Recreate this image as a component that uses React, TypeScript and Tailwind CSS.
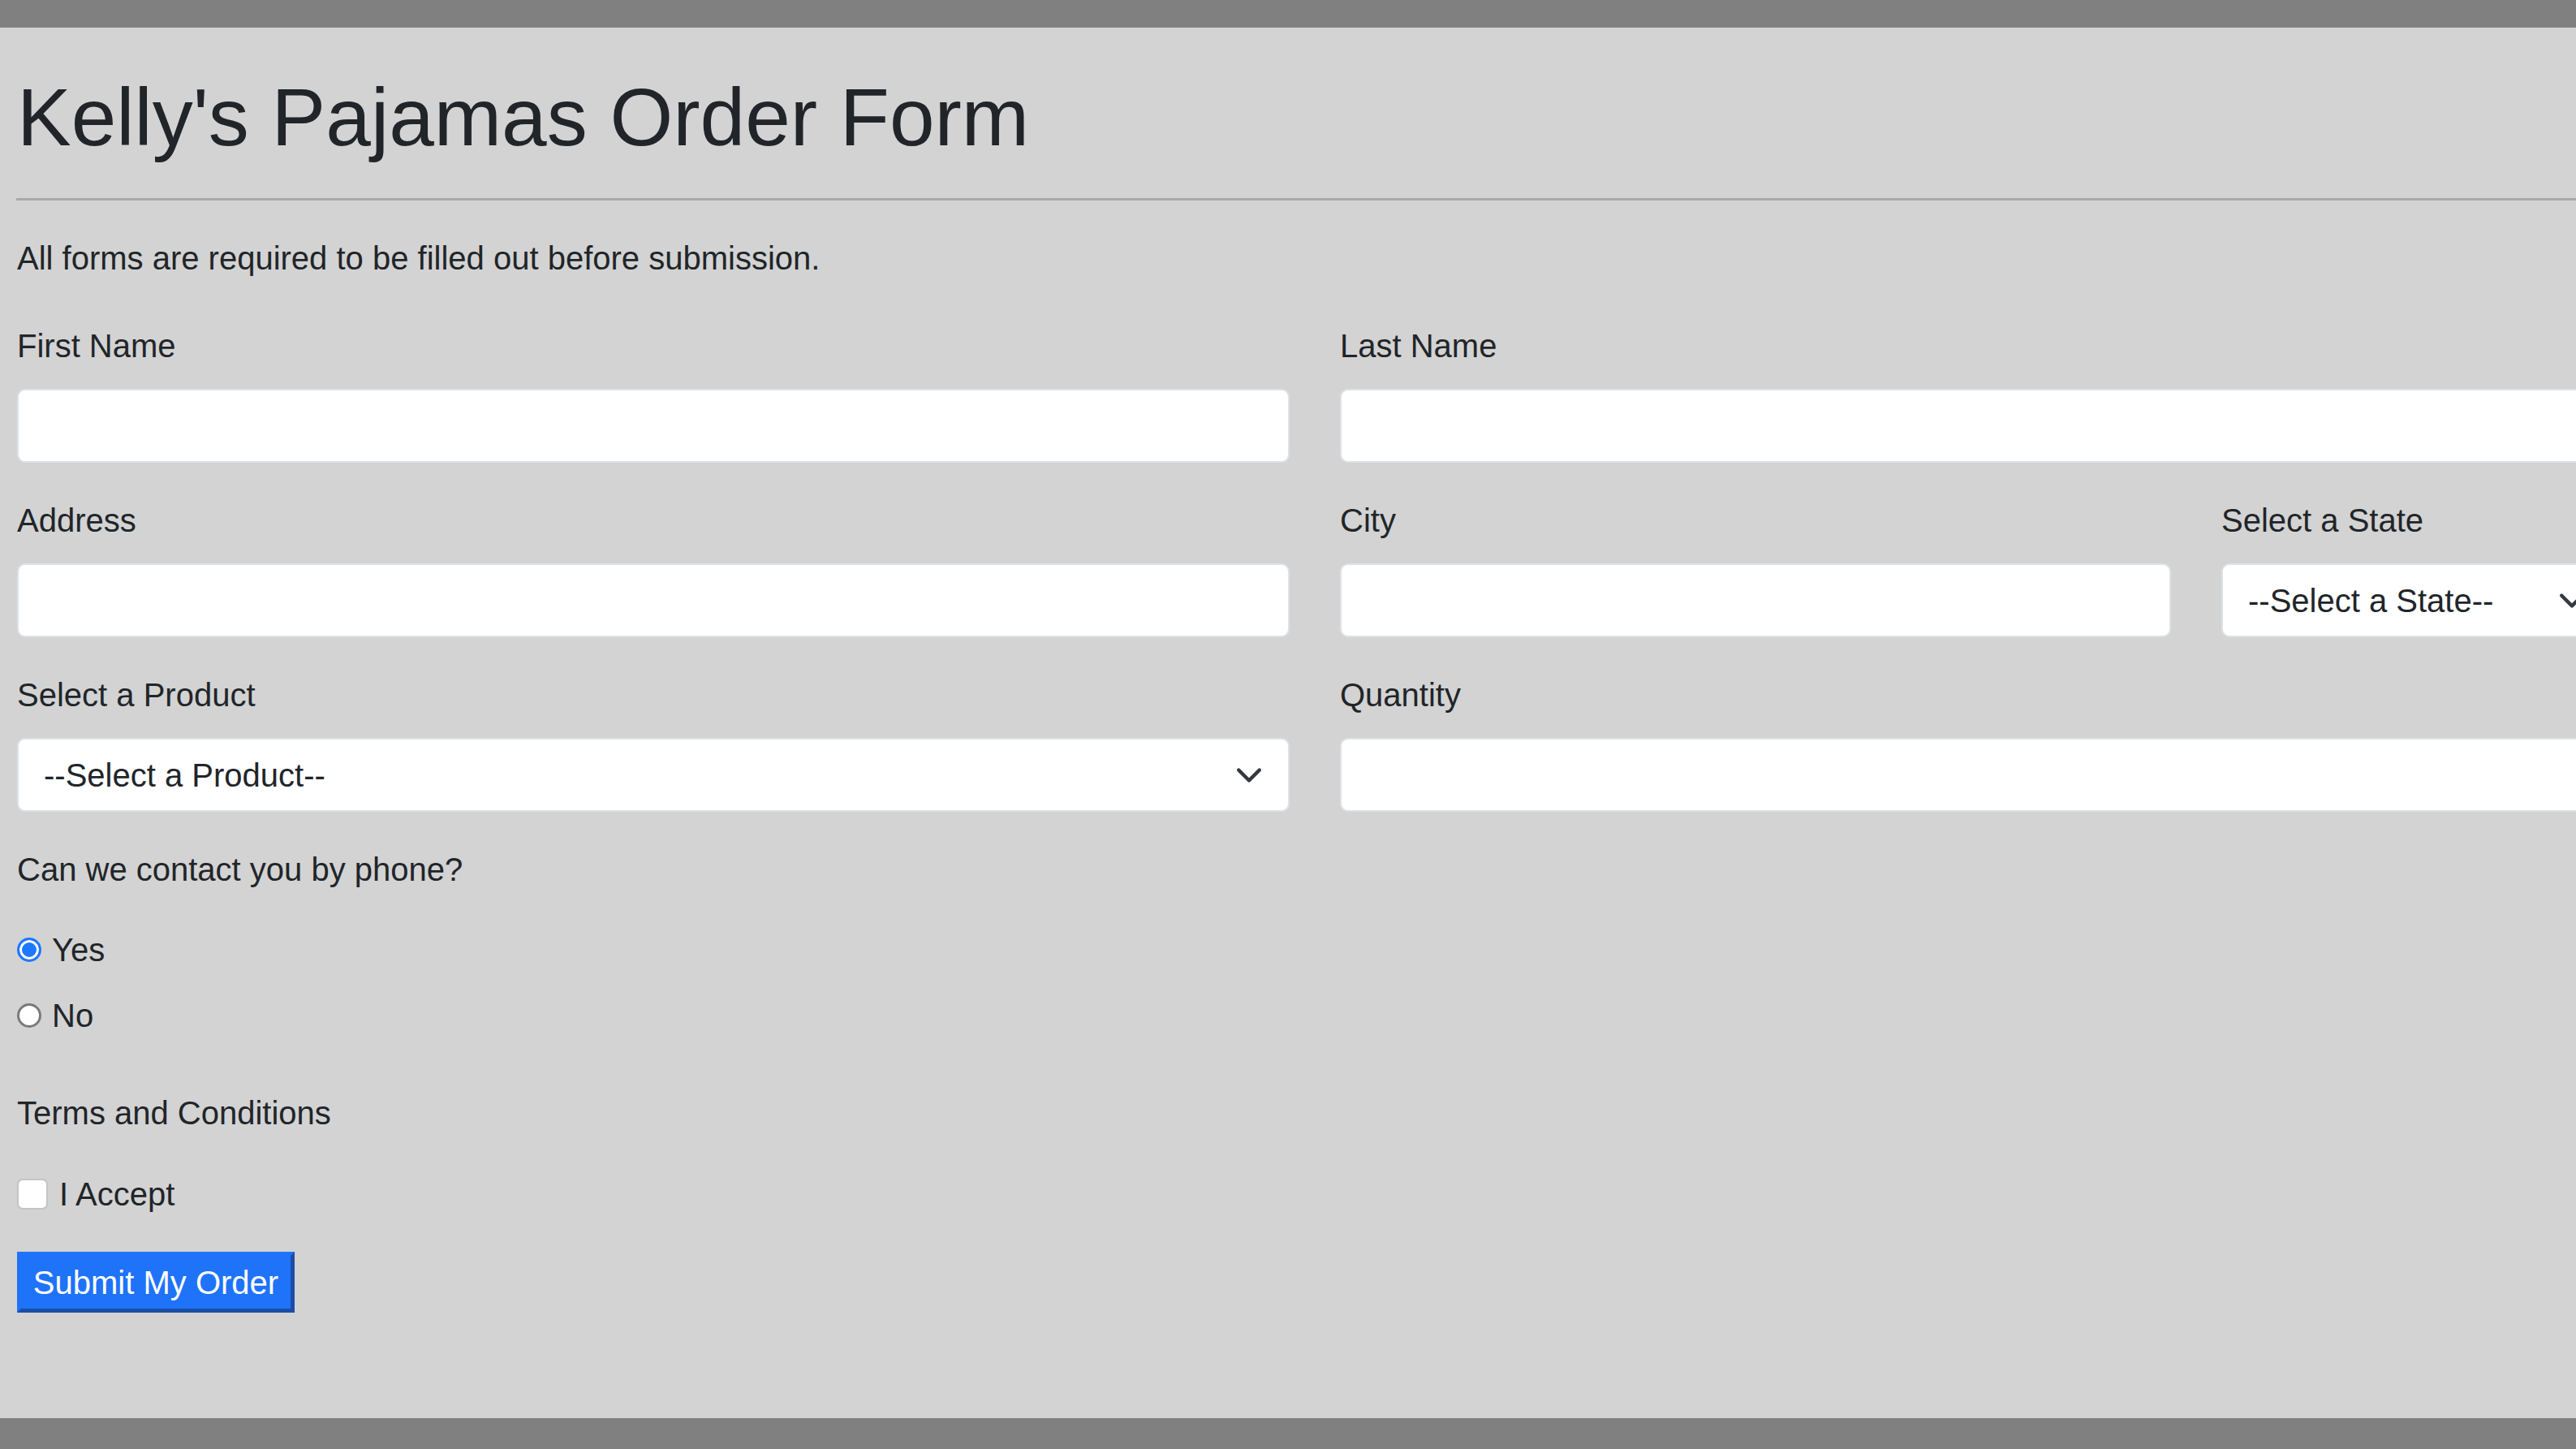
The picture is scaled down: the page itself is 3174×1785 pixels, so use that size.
import React from 'react';

const font = "font-['Liberation_Sans',Arial,Helvetica,sans-serif]";

const Chevron = () => (
  <svg
    width="34"
    height="34"
    viewBox="0 0 16 16"
    className="pointer-events-none absolute right-[33px] top-1/2 -translate-y-1/2"
  >
    <path d="M2 5l6 6 6-6" fill="none" stroke="#343a40" strokeWidth="2" strokeLinecap="round" strokeLinejoin="round" />
  </svg>
);

const Label = ({ children, htmlFor }: { children: React.ReactNode; htmlFor?: string }) => (
  <label htmlFor={htmlFor} className="mb-[23px] block text-[40px] leading-[60px] text-[#212529]">
    {children}
  </label>
);

const inputCls =
  'block h-[91px] w-full rounded-[10px] border-2 border-[#dee2e6] bg-white px-[31px] text-[40px] text-[#212529] outline-none';

const TextField = ({ id, label }: { id: string; label: string }) => (
  <div>
    <Label htmlFor={id}>{label}</Label>
    <input id={id} type="text" className={inputCls} />
  </div>
);

const SelectField = ({ id, label, placeholder }: { id: string; label: string; placeholder: string }) => (
  <div>
    <Label htmlFor={id}>{label}</Label>
    <div className="relative">
      <select id={id} defaultValue="" className={`${inputCls} appearance-none`}>
        <option value="">{placeholder}</option>
      </select>
      <Chevron />
    </div>
  </div>
);

const radioCls =
  'h-[30px] w-[30px] appearance-none rounded-full border-[3px] border-[#7a7a7a] bg-white checked:border-[#1e78ff] checked:bg-[#1e78ff] checked:shadow-[inset_0_0_0_3px_#ffffff]';

export default function App() {
  return (
    <div className={`${font} flex h-[1785px] w-screen flex-col overflow-hidden bg-[#d3d3d3] text-[#212529]`}>
      <div className="h-[34px] w-full shrink-0 bg-[#808080]" />

      <main className="flex-1 pl-[21px]">
        <div className="w-[3200px]">
          <h1 className="mt-[50px] text-[100px] font-normal leading-[120px]">Kelly's Pajamas Order Form</h1>
          <hr className="-ml-[1px] mt-[40px] h-[3px] border-0 bg-[#a9a9a9]" />
          <p className="mt-[41px] text-[40px] leading-[60px]">All forms are required to be filled out before submission.</p>

          <form className="mt-[48px]" onSubmit={(e) => e.preventDefault()}>
            <div className="grid grid-cols-[1568px_1567px] gap-x-[62px]">
              <TextField id="first" label="First Name" />
              <TextField id="last" label="Last Name" />
            </div>

            <div className="mt-[41px] grid grid-cols-[1568px_1024px_482px] gap-x-[62px]">
              <TextField id="address" label="Address" />
              <TextField id="city" label="City" />
              <SelectField id="state" label="Select a State" placeholder="--Select a State--" />
            </div>

            <div className="mt-[41px] grid grid-cols-[1568px_1567px] gap-x-[62px]">
              <SelectField id="product" label="Select a Product" placeholder="--Select a Product--" />
              <TextField id="qty" label="Quantity" />
            </div>

            <p className="mt-[41px] text-[40px] leading-[60px]">Can we contact you by phone?</p>

            <div className="mt-[39px] flex flex-col gap-y-[21px]">
              <label className="flex items-center text-[40px] leading-[60px]">
                <input type="radio" name="phone" defaultChecked className={radioCls} />
                <span className="ml-[13px]">Yes</span>
              </label>
              <label className="flex items-center text-[40px] leading-[60px]">
                <input type="radio" name="phone" className={radioCls} />
                <span className="ml-[13px]">No</span>
              </label>
            </div>

            <p className="mt-[60px] text-[40px] leading-[60px]">Terms and Conditions</p>

            <label className="mt-[40px] flex items-center text-[40px] leading-[60px]">
              <input
                type="checkbox"
                className="h-[38px] w-[38px] appearance-none rounded-[7px] border-2 border-[#c4c4c4] bg-white checked:bg-[#1e78ff]"
              />
              <span className="ml-[14px]">I Accept</span>
            </label>

            <button
              type="submit"
              className="mt-[41px] flex h-[75px] w-[342px] items-center justify-center border-[5px] border-t-[#1f73f8] border-l-[#1f73f8] border-r-[#1a4ea5] border-b-[#1a4ea5] bg-[#1f73f8] text-[40px] leading-none text-white"
            >
              Submit My Order
            </button>
          </form>
        </div>
      </main>

      <div className="h-[38px] w-full shrink-0 bg-[#808080]" />
    </div>
  );
}
